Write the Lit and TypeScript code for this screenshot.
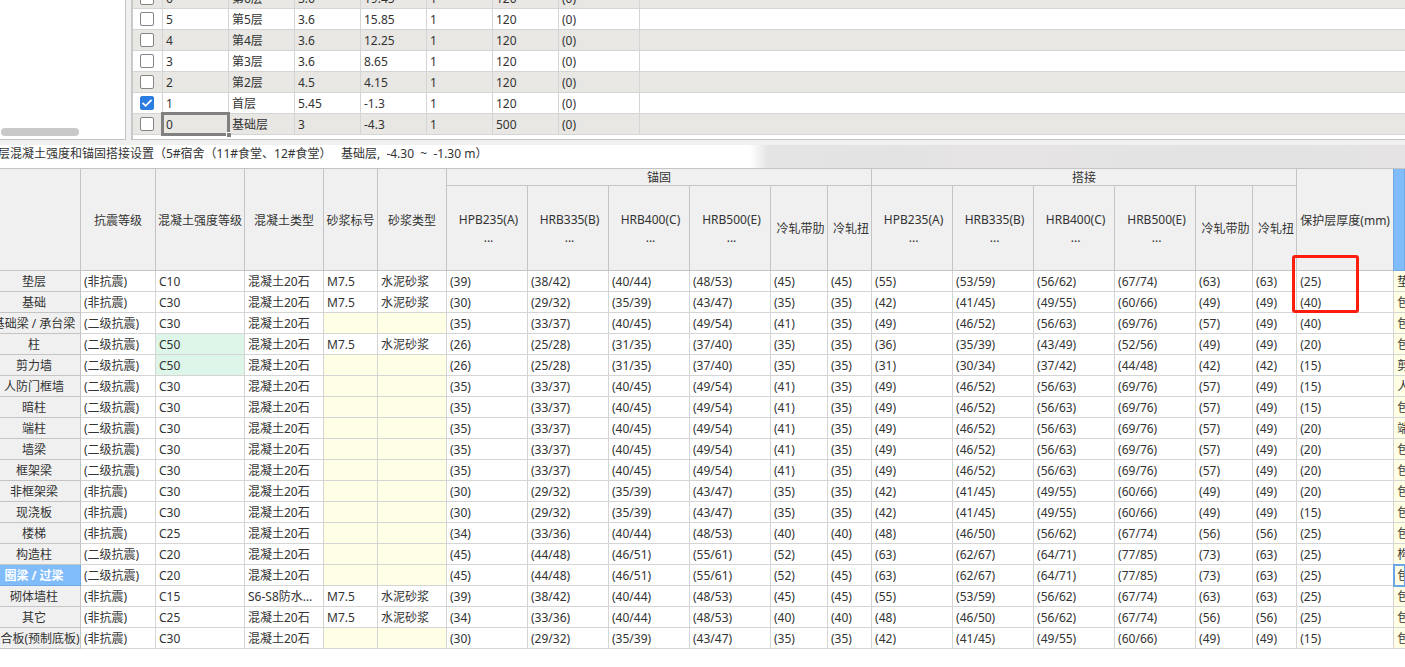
import { LitElement, html, css, nothing } from "lit";
import { customElement, state } from "lit/decorators.js";
import { classMap } from "lit/directives/class-map.js";

interface Floor {
  code: string;
  name: string;
  height: string;
  base: string;
  thickness: string;
  checked: boolean;
}

const floor = (code: string, name: string, height: string, base: string, thickness = "120", checked = false): Floor =>
  ({ code, name, height, base, thickness, checked });

const FLOORS: Floor[] = [
  floor("6", "第6层", "3.6", "19.45"),
  floor("5", "第5层", "3.6", "15.85"),
  floor("4", "第4层", "3.6", "12.25"),
  floor("3", "第3层", "3.6", "8.65"),
  floor("2", "第2层", "4.5", "4.15"),
  floor("1", "首层", "5.45", "-1.3", "120", true),
  floor("0", "基础层", "3", "-4.3", "500"),
];

// Anchorage lengths followed by lap lengths, in column order.
const LENGTHS: Record<string, string> = {
  a39: "39 38/42 40/44 48/53 45 45 55 53/59 56/62 67/74 63 63",
  a30: "30 29/32 35/39 43/47 35 35 42 41/45 49/55 60/66 49 49",
  a35: "35 33/37 40/45 49/54 41 35 49 46/52 56/63 69/76 57 49",
  b35: "35 33/37 40/45 49/54 41 35 49 46/52 56/63 69/76 57 49",
  a26: "26 25/28 31/35 37/40 35 35 36 35/39 43/49 52/56 49 49",
  a26w: "26 25/28 31/35 37/40 35 35 31 30/34 37/42 44/48 42 42",
  a34: "34 33/36 40/44 48/53 40 40 48 46/50 56/62 67/74 56 56",
  a45: "45 44/48 46/51 55/61 52 45 63 62/67 64/71 77/85 73 63",
};

const NONE = "(非抗震)";
const SECOND = "(二级抗震)";
const STONE = "混凝土20石";

// member, seismic grade, strength, concrete type, has mortar, lengths, cover, remark
type Member = [string, string, string, string, boolean, string, string, string];
const MEMBERS: Member[] = [
  ["垫层", NONE, "C10", STONE, true, "a39", "25", "垫"],
  ["基础", NONE, "C30", STONE, true, "a30", "40", "包"],
  ["基础梁 / 承台梁", SECOND, "C30", STONE, false, "a35", "40", "包"],
  ["柱", SECOND, "C50", STONE, true, "a26", "20", "包"],
  ["剪力墙", SECOND, "C50", STONE, false, "a26w", "15", "剪"],
  ["人防门框墙", SECOND, "C30", STONE, false, "a35", "15", "人"],
  ["暗柱", SECOND, "C30", STONE, false, "a35", "15", "包"],
  ["端柱", SECOND, "C30", STONE, false, "a35", "20", "端"],
  ["墙梁", SECOND, "C30", STONE, false, "a35", "20", "包"],
  ["框架梁", SECOND, "C30", STONE, false, "a35", "20", "包"],
  ["非框架梁", NONE, "C30", STONE, false, "a30", "20", "包"],
  ["现浇板", NONE, "C30", STONE, false, "a30", "15", "包"],
  ["楼梯", NONE, "C25", STONE, false, "a34", "25", "包"],
  ["构造柱", SECOND, "C20", STONE, false, "a45", "25", "构"],
  ["圈梁 / 过梁", SECOND, "C20", STONE, false, "a45", "25", "包"],
  ["砌体墙柱", NONE, "C15", "S6-S8防水混凝土", true, "a39", "25", "包"],
  ["其它", NONE, "C25", STONE, true, "a34", "25", "包"],
  ["叠合板(预制底板)", NONE, "C30", STONE, false, "a30", "15", "包"],
];

const STEELS = ["HPB235(A)", "HRB335(B)", "HRB400(C)", "HRB500(E)"];

@customElement("floor-table")
class FloorTable extends LitElement {
  @state() private floors = FLOORS;

  static styles = css`
    :host { display: block; }
    table { width: 100%; table-layout: fixed; border-collapse: separate; border-spacing: 0; }
    td {
      box-sizing: border-box; height: 21px; padding: 2px 3px 0; line-height: 18px;
      border-right: 1px solid #d5d5d5; border-bottom: 1px solid #d5d5d5;
      white-space: nowrap;
    }
    td:last-child { border-right: 0; }
    tr:nth-child(odd) td { background: #e8e7e3; }
    .c-check { width: 30px; }
    .c-std { width: 66px; }
    .c-note { width: 81px; }
    .check { padding: 0 0 0 7px; }
    input {
      appearance: none; display: block; box-sizing: border-box; width: 14px; height: 14px; margin: 0;
      border: 1px solid #858585; border-radius: 2px; background: #fff;
    }
    input:checked {
      border-color: #2b7de1;
      background: #2b7de1 url("data:image/svg+xml,%3Csvg xmlns='http://www.w3.org/2000/svg' viewBox='0 0 12 12'%3E%3Cpath d='M1.6 5.8 4.6 8.8 10.6 2.8' fill='none' stroke='white' stroke-width='1.8'/%3E%3C/svg%3E") center / 12px 12px no-repeat;
    }
    .current { position: relative; }
    .frame { position: absolute; inset: -2px; border: 3px solid #808080; }
    .handle {
      position: absolute; right: -4px; bottom: -4px; width: 4px; height: 4px;
      background: #808080; border-top: 1px solid #fff; border-left: 1px solid #fff;
    }
  `;

  render() {
    return html`
      <table>
        <colgroup>
          <col class="c-check">
          ${[1, 2, 3, 4, 5, 6].map(() => html`<col class="c-std">`)}
          <col class="c-note"><col>
        </colgroup>
        <tbody>
          ${this.floors.map((f) => html`
            <tr>
              <td class="check"><input type="checkbox" aria-label=${f.name} .checked=${f.checked}></td>
              <td class=${classMap({ current: f.code === "0" })}>${f.code}${f.code === "0"
                ? html`<div class="frame"><div class="handle"></div></div>` : nothing}</td>
              <td>${f.name}</td><td>${f.height}</td><td>${f.base}</td><td>1</td>
              <td>${f.thickness}</td><td>(0)</td><td></td>
            </tr>`)}
        </tbody>
      </table>`;
  }
}

@customElement("strength-table")
class StrengthTable extends LitElement {
  @state() private selected = "圈梁 / 过梁";

  static styles = css`
    :host { display: block; overflow: hidden; border-top: 1px solid #c4c4c4; }
    table {
      width: calc(100% + 12px); margin-left: -12px;
      table-layout: fixed; border-collapse: separate; border-spacing: 0;
    }
    th, td {
      box-sizing: border-box; height: 21px; padding: 2px 3px 0; line-height: 18px;
      border-right: 1px solid #d5d5d5; border-bottom: 1px solid #d5d5d5;
      white-space: nowrap; overflow: hidden; text-align: left; font-weight: 400;
    }
    th { background: #f0f0f0; border-color: #c4c4c4; text-align: center; padding: 2px 0 0; }
    .group { height: 17px; line-height: 14px; }
    .sub { height: 85px; padding-left: 3px; line-height: 18px; }
    .last { border-right-color: #6fa9e6; }
    .active { background: #80bbfa; border-color: #6fa9e6; }
    tbody .active { color: #fff; font-weight: 700; }
    .changed { background: #def5ea; }
    .locked { background: #ffffe6; }
    .type { text-overflow: ellipsis; }
    td.remark { background: #ffffe6; padding-right: 0; border-right: 0; }
    td.focus { outline: 2px solid #6aa6e6; outline-offset: -1px; }
    td.marked { position: relative; overflow: visible; }
    .mark {
      position: absolute; left: -5px; top: -16px; box-sizing: border-box; width: 67px; height: 58px;
      border: 3px solid #fd1d0f; border-radius: 3px; pointer-events: none;
    }
    .w93 { width: 93px; } .w75 { width: 75px; } .w89 { width: 89px; } .w79 { width: 79px; }
    .w54 { width: 54px; } .w69 { width: 69px; } .w81 { width: 81px; } .w57 { width: 57px; }
    .w44 { width: 44px; } .w97 { width: 97px; }
  `;

  private steelHeads() {
    return html`${STEELS.map((s) => html`<th class="sub">${s}<br>...</th>`)}
      <th class="sub">冷轧带肋</th><th class="sub">冷轧扭</th>`;
  }

  render() {
    const widths = [93, 75, 89, 79, 54, 69, 81, 81, 81, 81, 57, 44, 81, 81, 81, 81, 57, 44, 97];
    return html`
      <table>
        <colgroup>${widths.map((w) => html`<col class="w${w}">`)}<col></colgroup>
        <thead>
          <tr>
            <th rowspan="2"></th>
            <th rowspan="2">抗震等级</th><th rowspan="2">混凝土强度等级</th>
            <th rowspan="2">混凝土类型</th><th rowspan="2">砂浆标号</th><th rowspan="2">砂浆类型</th>
            <th class="group" colspan="6">锚固</th><th class="group" colspan="6">搭接</th>
            <th class="last" rowspan="2">保护层厚度(mm)</th>
            <th class="active" rowspan="2"></th>
          </tr>
          <tr>${this.steelHeads()}${this.steelHeads()}</tr>
        </thead>
        <tbody>
          ${MEMBERS.map(([name, grade, strength, type, mortar, key, cover, remark], i) => html`
            <tr>
              <th class=${classMap({ active: name === this.selected })}>${name}</th>
              <td>${grade}</td>
              <td class=${classMap({ changed: strength === "C50" })}>${strength}</td>
              <td class="type">${type}</td>
              <td class=${classMap({ locked: !mortar })}>${mortar ? "M7.5" : nothing}</td>
              <td class=${classMap({ locked: !mortar })}>${mortar ? "水泥砂浆" : nothing}</td>
              ${LENGTHS[key].split(" ").map((v) => html`<td>(${v})</td>`)}
              <td class=${classMap({ marked: i === 0 })}>(${cover})${i === 0
                ? html`<div class="mark"></div>` : nothing}</td>
              <td class=${classMap({ remark: true, focus: name === this.selected })}>${remark}</td>
            </tr>`)}
        </tbody>
      </table>`;
  }
}

@customElement("app-root")
class AppRoot extends LitElement {
  static styles = css`
    :host {
      display: block; min-height: 100vh; overflow: hidden; background: #fff; color: #333;
      font: 12px/20px "Noto Sans", "Noto Sans CJK SC", sans-serif;
    }
    .upper { display: flex; gap: 5px; height: 140px; background: #f0f0f0; }
    .tree, .floors {
      box-sizing: border-box; display: flex; flex-direction: column; justify-content: flex-end;
      background: #fff; border-bottom: 1px solid #c4c4c4; overflow: hidden;
    }
    .tree { flex: 0 0 126px; border-right: 1px solid #c4c4c4; padding: 0 0 3px 1px; }
    .thumb { width: 78px; height: 8px; border-radius: 4px; background: #c9c9c9; }
    .floors { flex: 1; min-width: 0; border-left: 2px solid #c9c9c9; padding-bottom: 4px; }
    .title {
      margin: 0; height: 23px; line-height: 18px; white-space: pre;
      border-top: 5px solid #f0f0f0; text-indent: -2px; font-size: 12px; font-weight: 400;
      background: linear-gradient(90deg, #fff 750px, #e4e4e4 768px, #e3e3e3 900px, #e7e4e5 980px, #e3e3e3 1200px, #e5e3e4);
    }
  `;

  render() {
    return html`
      <section class="upper">
        <div class="tree"><div class="thumb"></div></div>
        <div class="floors"><floor-table></floor-table></div>
      </section>
      <h2 class="title">层混凝土强度和锚固搭接设置（5#宿舍（11#食堂、12#食堂）   基础层,  -4.30  ~  -1.30 m）</h2>
      <strength-table></strength-table>`;
  }
}
